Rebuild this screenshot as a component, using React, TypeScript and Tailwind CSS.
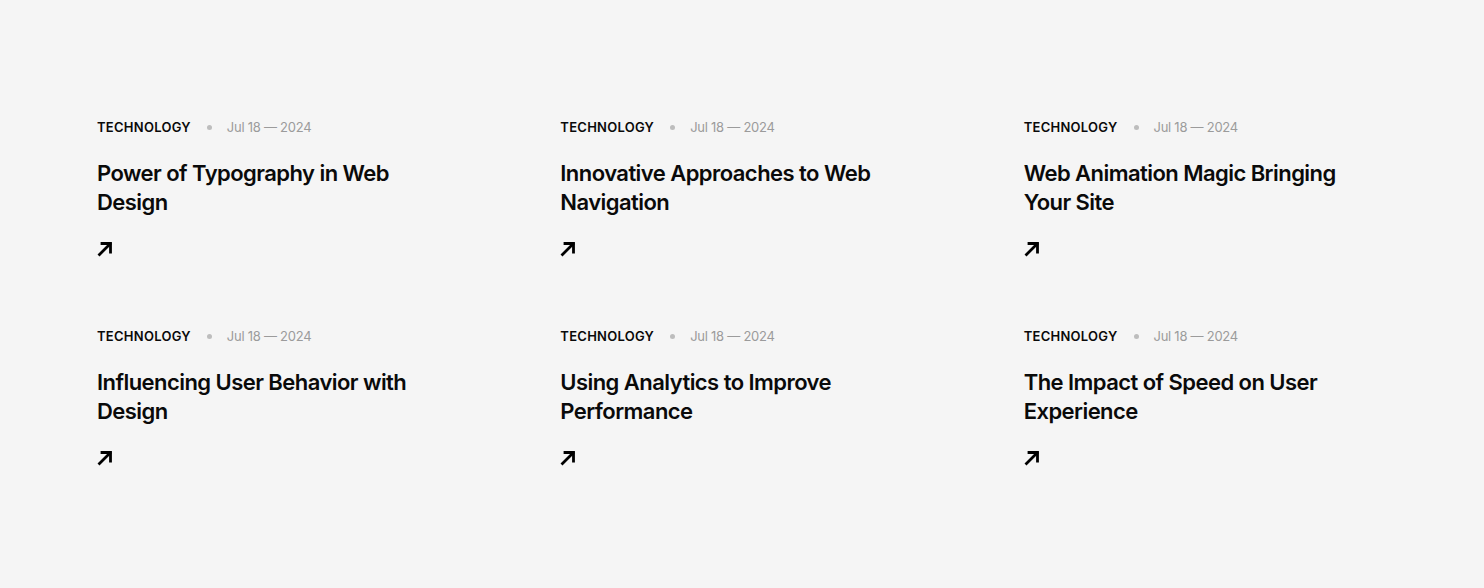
import React from 'react';

const posts = [
  'Power of Typography in Web Design',
  'Innovative Approaches to Web Navigation',
  'Web Animation Magic Bringing Your Site',
  'Influencing User Behavior with Design',
  'Using Analytics to Improve Performance',
  'The Impact of Speed on User Experience',
];

const ArrowUpRight: React.FC = () => (
  <svg width="17" height="17" viewBox="0 0 17 17" fill="none" stroke="#000" strokeWidth="2.8" strokeLinecap="square">
    <path d="M2.5 14.5L13 4" />
    <path d="M5 3.5H13.5V12" />
  </svg>
);

const App: React.FC = () => {
  return (
    <div className="min-h-[588px] w-full bg-[#f5f5f5] pt-[117px] pb-[70px] font-['Inter',sans-serif]">
      <div className="mx-auto grid w-[1290px] grid-cols-3 gap-x-[100px] gap-y-[69px]">
        {posts.map((title, idx) => (
          <article key={idx} className="flex flex-col">
            {/* meta */}
            <div className="flex h-5 items-center text-[13px] leading-5">
              <span className="font-semibold uppercase tracking-[0.02em] text-[#0a0a0a]">Technology</span>
              <span className="ml-4 mr-[15px] h-[5px] w-[5px] rounded-full bg-[#bdbdbd]" />
              <span className="tracking-[-0.02em] text-[#9b9b9b]">Jul 18 — 2024</span>
            </div>
            <h3 className="mt-[22px] text-[22px] font-semibold leading-[29px] tracking-[-0.025em] text-[#0a0a0a]">
              {title}
            </h3>
            <a href="#" className="mt-[23px] block h-[17px] w-[17px]">
              <ArrowUpRight />
            </a>
          </article>
        ))}
      </div>
    </div>
  );
};

export default App;
